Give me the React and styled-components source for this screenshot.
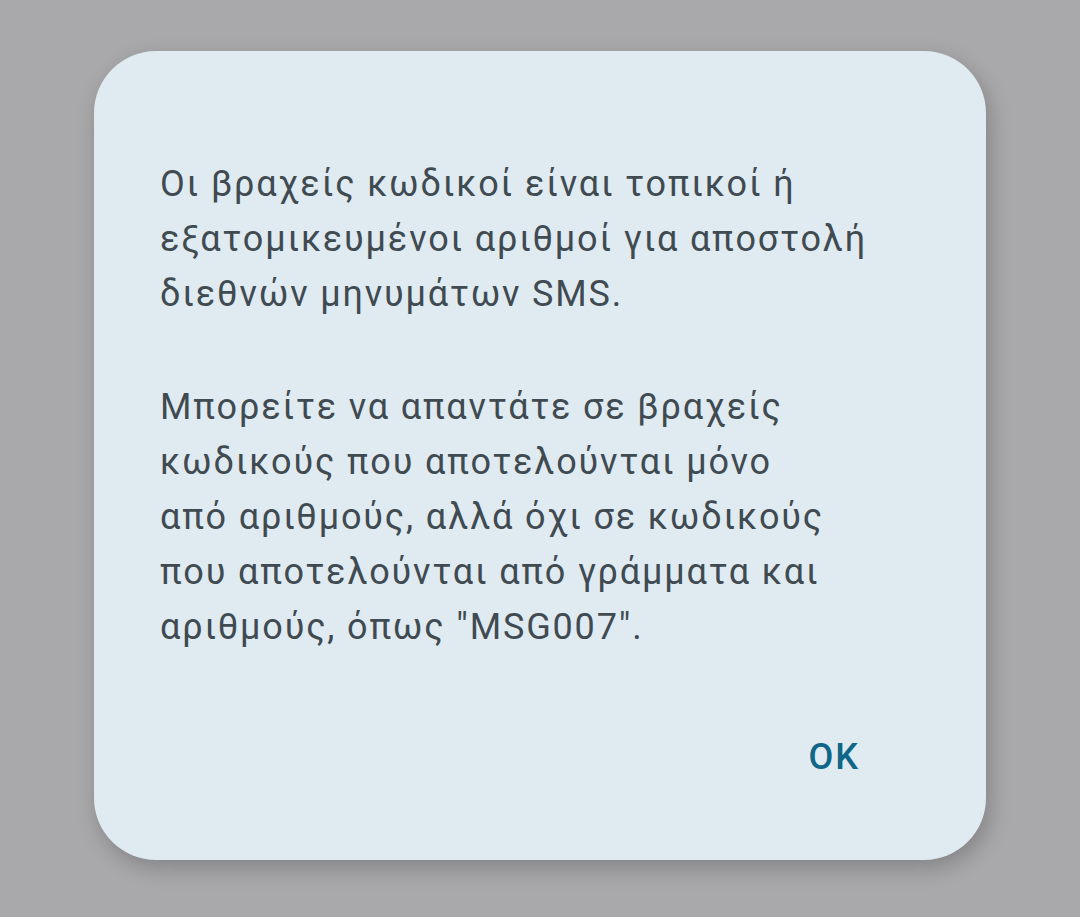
import React from 'react';
import styled, { createGlobalStyle } from 'styled-components';

const GlobalStyle = createGlobalStyle`
  html, body {
    margin: 0;
    padding: 0;
    background: #a9a9ab;
  }
`;

const Page = styled.div`
  min-height: 917px;
  box-sizing: border-box;
  padding-top: 51px;
  display: flex;
  justify-content: center;
  align-items: flex-start;
  font-family: Roboto, "Noto Sans", sans-serif;
`;

const Dialog = styled.div`
  width: 892px;
  height: 809px;
  box-sizing: border-box;
  padding: 106px 66px 75px 66px;
  background: #dfeaf1;
  border-radius: 62px;
  box-shadow: 4px 8px 22px rgba(0, 0, 0, 0.22);
  display: flex;
  flex-direction: column;
`;

const Paragraph = styled.p`
  margin: 0 0 ${(p) => (p.last ? '0' : '58px')} 0;
  font-size: 36px;
  line-height: 55px;
  letter-spacing: 1.85px;
  color: #3f4a51;
  font-weight: 400;
  white-space: nowrap;
`;

const Actions = styled.div`
  margin-top: auto;
  display: flex;
  justify-content: flex-end;
  padding-right: 60px;
`;

const OkButton = styled.button`
  border: none;
  background: none;
  padding: 0;
  font-family: Roboto, "Noto Sans", sans-serif;
  font-size: 36px;
  line-height: 55px;
  letter-spacing: 2px;
  font-weight: 500;
  color: #0f6688;
  cursor: pointer;
`;

const App = () => (
  <>
    <GlobalStyle />
    <Page>
      <Dialog>
        <Paragraph>
          Οι βραχείς κωδικοί είναι τοπικοί ή
          <br />
          εξατομικευμένοι αριθμοί για αποστολή
          <br />
          διεθνών μηνυμάτων SMS.
        </Paragraph>
        <Paragraph last>
          Μπορείτε να απαντάτε σε βραχείς
          <br />
          κωδικούς που αποτελούνται μόνο
          <br />
          από αριθμούς, αλλά όχι σε κωδικούς
          <br />
          που αποτελούνται από γράμματα και
          <br />
          αριθμούς, όπως "MSG007".
        </Paragraph>
        <Actions>
          <OkButton>OK</OkButton>
        </Actions>
      </Dialog>
    </Page>
  </>
);

export default App;
